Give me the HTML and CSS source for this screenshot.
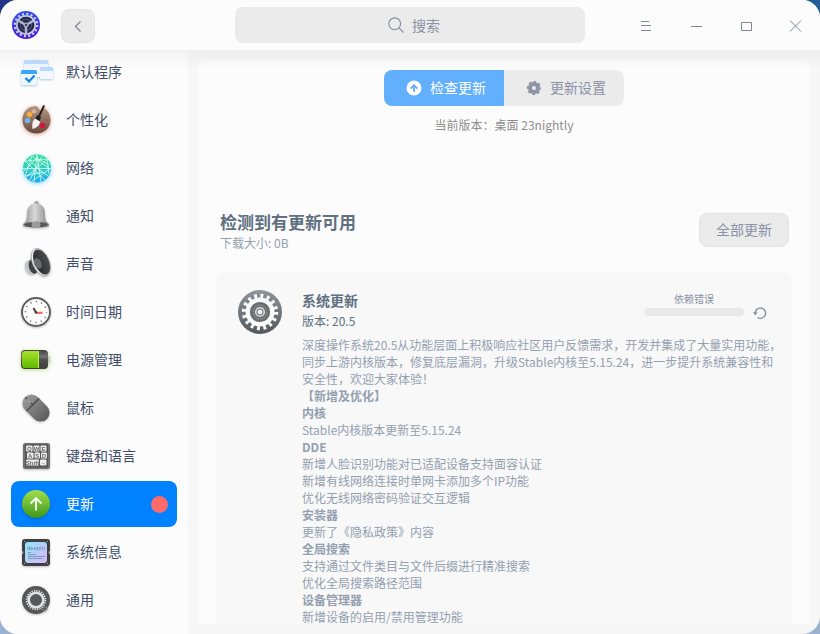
FILE: index.html
```html
<!DOCTYPE html>
<html lang="zh-CN">
<head>
    <meta charset="UTF-8">
    <meta name="viewport" content="width=device-width, initial-scale=1.0">
    <title>控制中心</title>
    <link rel="stylesheet" href="styles.css">
</head>
<body>
    <div class="window">
        <header class="titlebar">
            <div class="titlebar-left">
                <svg class="logo" width="28" height="28" viewBox="0 0 28 28">
                    <defs>
                        <linearGradient id="logo-bg" x1="0" y1="0" x2="0" y2="1">
                            <stop offset="0" stop-color="#2b50f2"/>
                            <stop offset="1" stop-color="#5316d6"/>
                        </linearGradient>
                    </defs>
                    <circle cx="14" cy="14" r="14" fill="url(#logo-bg)"/>
                    <circle cx="14" cy="14" r="11" fill="none" stroke="#cdd2ea" stroke-width="2.600" stroke-dasharray="2 2.320"/>
                    <circle cx="14" cy="14" r="9.200" fill="#23264f" stroke="#c2c8dc" stroke-width="1.800"/>
                    <circle cx="14" cy="14" r="5.600" fill="none" stroke="#4d5272" stroke-width="1.200"/>
                    <path d="M14 14L6.500 9.800M14 14l7.500-4.200M14 14v9" stroke="#b4bad0" stroke-width="2.400"/>
                    <circle cx="14" cy="14" r="2.600" fill="#a3a9c4"/>
                    <circle cx="14" cy="14" r="1.100" fill="#26294d"/>
                </svg>
                <button class="btn back" aria-label="返回">
                    <svg width="16" height="16" viewBox="0 0 16 16" fill="none" stroke="#7f8597" stroke-width="1.300">
                        <path d="M10.500 3.500L5.500 8.500l5 5"/>
                    </svg>
                </button>
            </div>
            <label class="search">
                <svg width="16" height="16" viewBox="0 0 16 16" fill="none" stroke="#8c91a5" stroke-width="1.200">
                    <circle cx="6.700" cy="6.700" r="5.900"/>
                    <path d="M11 11l4.500 4.500"/>
                </svg>
                <input type="text" placeholder="搜索" aria-label="搜索">
            </label>
            <div class="window-controls">
                <button aria-label="菜单"><svg width="16" height="16" viewBox="0 0 16 16"><path d="M4 4.500h8M4 8.500h10M4 13.500h10"/></svg></button>
                <button aria-label="最小化"><svg width="16" height="16" viewBox="0 0 16 16"><path d="M4 9.500h11"/></svg></button>
                <button aria-label="最大化"><svg width="16" height="16" viewBox="0 0 16 16"><path d="M4.500 5.500h10v8h-10z"/></svg></button>
                <button aria-label="关闭"><svg width="16" height="16" viewBox="0 0 16 16"><path d="M3 3.500l11 11M14 3.500l-11 11"/></svg></button>
            </div>
        </header>

        <div class="body">
            <nav class="sidebar">
                <a class="item" href="#">
                    <svg class="soft sky" width="36" height="36" viewBox="0 0 36 36">
                        <rect x="6" y="6" width="24" height="17" rx="1.500" fill="#f0f7ff"/>
                        <path d="M6 10V7.500Q6 6 7.500 6h21Q30 6 30 7.500V10z" fill="#bedcff"/>
                        <rect x="22" y="13" width="13" height="12" rx="1.500" fill="#f3f8ff"/>
                        <path d="M22 17v-2.500q0-1.500 1.500-1.500h10q1.500 0 1.500 1.500V17z" fill="#b9d9ff"/>
                        <rect x="3" y="16" width="16" height="15" rx="1.500" fill="#eef6ff"/>
                        <path d="M3 20v-2.500Q3 16 4.500 16h13q1.500 0 1.500 1.500V20z" fill="#3ea5ff"/>
                        <path d="M7.500 24l3.500 3.500 5.500-6" fill="none" stroke="#0a84f5" stroke-width="2.200"/>
                    </svg>
                    <span>默认程序</span>
                </a>
                <a class="item" href="#">
                    <svg class="soft brown" width="36" height="36" viewBox="0 0 36 36">
                        <defs>
                            <linearGradient id="pal" x1="0" y1="0" x2="0" y2="1">
                                <stop offset="0" stop-color="#b59882"/>
                                <stop offset="1" stop-color="#6b4a3c"/>
                            </linearGradient>
                        </defs>
                        <path d="M17 4C9 4.500 4.500 10.500 4.500 18c0 8 6 13.500 14 13.500S32.500 26 32.500 18c0-5-2.500-9.500-6.500-12-2 1-2 2.500-4 2-1.800-.5-1-4-5-4z" fill="url(#pal)"/>
                        <circle cx="11.500" cy="12.500" r="2.700" fill="#f6ad37"/>
                        <circle cx="16" cy="9.500" r="2.200" fill="#d7b3a6"/>
                        <circle cx="9.500" cy="18.500" r="2.700" fill="#6fb5f5"/>
                        <circle cx="24.500" cy="23.500" r="2.700" fill="#d8103e"/>
                        <path d="M25.800 4.200L20.500 15.500" stroke="#1d1d22" stroke-width="2" stroke-linecap="round"/>
                        <path d="M19.500 13l3.500 2-1.500 4.500-4.500-3z" fill="#222"/>
                        <path d="M17 16.500l5 3c0 3.500-3.500 6.500-7.500 7.500-.5-4-.5-7.500 2.500-10.500z" fill="#f5f3f0"/>
                    </svg>
                    <span>个性化</span>
                </a>
                <a class="item" href="#">
                    <svg class="soft blue" width="36" height="36" viewBox="0 0 36 36">
                        <defs>
                            <linearGradient id="net" x1="0" y1="0" x2="0" y2="1">
                                <stop offset="0" stop-color="#2bdc91"/>
                                <stop offset=".55" stop-color="#35ccc6"/>
                                <stop offset="1" stop-color="#1ba6f2"/>
                            </linearGradient>
                            <clipPath id="net-clip"><circle cx="19" cy="18.500" r="14"/></clipPath>
                        </defs>
                        <circle cx="19" cy="18.500" r="14" fill="url(#net)"/>
                        <g clip-path="url(#net-clip)" fill="none" stroke="#d8fff4" stroke-width=".8">
                            <path d="M5 18.500h28M19 5l-3 27M19 5l4 27M7 11l22-2 2 15M7 11l20 19M30 9L8 27M14 6l-7 20 18-4M14 6l18 13-18 12M10 8l9 10 11 8M24 6L12 30M5 22l14-14 12 7"/>
                        </g>
                    </svg>
                    <span>网络</span>
                </a>
                <a class="item" href="#">
                    <svg class="soft" width="36" height="36" viewBox="0 0 36 36">
                        <defs>
                            <linearGradient id="bell">
                                <stop offset="0" stop-color="#8e8e8e"/>
                                <stop offset=".45" stop-color="#d8d8d8"/>
                                <stop offset="1" stop-color="#858585"/>
                            </linearGradient>
                        </defs>
                        <circle cx="18.500" cy="5.500" r="2.500" fill="#a5a5a5"/>
                        <path d="M18 5.500c-6 0-9 4.500-9 10 0 6-1 8-3 9.500-1.500 1.200-1.500 3 0 3.500 7 1.600 17 1.600 24 0 1.500-.5 1.500-2.300 0-3.500-2-1.500-3-3.500-3-9.500 0-5.500-3-10-9-10z" fill="url(#bell)"/>
                        <ellipse cx="18" cy="26.800" rx="12" ry="2.800" fill="#575757"/>
                        <ellipse cx="18" cy="26.500" rx="4.500" ry="3.200" fill="#9b9b9b"/>
                    </svg>
                    <span>通知</span>
                </a>
                <a class="item" href="#">
                    <svg class="soft" width="36" height="36" viewBox="0 0 36 36">
                        <defs>
                            <linearGradient id="cone">
                                <stop offset="0" stop-color="#29292b"/>
                                <stop offset="1" stop-color="#4c4e51"/>
                            </linearGradient>
                        </defs>
                        <path d="M12 14c-3.500 0-5.500 3-5 7 .5 5 4 8 8 7.500l4-3z" fill="#c3c5cb"/>
                        <path d="M11.500 15c-2 4-.5 11 5 13l3-2-5-14z" fill="#3e3f42"/>
                        <ellipse cx="22.800" cy="16.200" rx="8.300" ry="14.600" transform="rotate(-24 22.800 16.200)" fill="#ececec" stroke="#9d9d9d" stroke-width=".7"/>
                        <ellipse cx="23.600" cy="16" rx="7.200" ry="13.300" transform="rotate(-24 23.600 16)" fill="url(#cone)"/>
                        <ellipse cx="19.800" cy="17.500" rx="3.600" ry="5.500" transform="rotate(-24 19.800 17.500)" fill="#6a6c70"/>
                    </svg>
                    <span>声音</span>
                </a>
                <a class="item" href="#">
                    <svg class="soft" width="36" height="36" viewBox="0 0 36 36">
                        <circle cx="18" cy="18" r="14" fill="#fdfdfd" stroke="#5d5f61" stroke-width="2"/>
                        <circle cx="18" cy="18" r="10.500" fill="none" stroke="#4f4f4f" stroke-width="1.500" stroke-dasharray="1 4.498" stroke-dashoffset=".5"/>
                        <path d="M15.500 14l2.500 4.500" stroke="#444" stroke-width="2"/>
                        <path d="M18 18.800h6.500" stroke="#ff5b5b" stroke-width="2"/>
                        <circle cx="18" cy="18.500" r="1.300" fill="#444"/>
                    </svg>
                    <span>时间日期</span>
                </a>
                <a class="item" href="#">
                    <svg class="soft green" width="36" height="36" viewBox="0 0 36 36">
                        <defs>
                            <linearGradient id="charge" x1="0" y1="0" x2="0" y2="1">
                                <stop offset="0" stop-color="#a7e32d"/>
                                <stop offset="1" stop-color="#61b800"/>
                            </linearGradient>
                            <linearGradient id="cell" x1="0" y1="0" x2="0" y2="1">
                                <stop offset="0" stop-color="#414141"/>
                                <stop offset=".35" stop-color="#747474"/>
                                <stop offset=".5" stop-color="#505050"/>
                                <stop offset="1" stop-color="#3d3d3d"/>
                            </linearGradient>
                        </defs>
                        <rect x="29" y="14" width="3" height="7" rx="1" fill="#c9c9c9"/>
                        <rect x="3" y="8" width="27" height="19" rx="4" fill="url(#cell)"/>
                        <path d="M21 9H7Q4 9 4 12v11q0 3 3 3h14z" fill="url(#charge)"/>
                        <path d="M20.500 9v17" stroke="#b8f34c"/>
                    </svg>
                    <span>电源管理</span>
                </a>
                <a class="item" href="#">
                    <svg class="soft" width="36" height="36" viewBox="0 0 36 36">
                        <defs>
                            <linearGradient id="mouse" x1="0" y1="0" x2="0" y2="1">
                                <stop offset="0" stop-color="#9a9a9a"/>
                                <stop offset="1" stop-color="#5a5a5a"/>
                            </linearGradient>
                        </defs>
                        <g transform="rotate(-45 18 18)">
                            <rect x="9" y="2.500" width="18" height="31" rx="9" fill="url(#mouse)"/>
                            <path d="M9 13.500h18M18 3v10.500" stroke="#454545" stroke-width="1.200"/>
                            <path d="M18 6v4" stroke="#a0a0a0" stroke-width="1.600" stroke-linecap="round"/>
                        </g>
                    </svg>
                    <span>鼠标</span>
                </a>
                <a class="item" href="#">
                    <svg class="soft" width="36" height="36" viewBox="0 0 36 36">
                        <rect x="5" y="5" width="27" height="26" rx="2.500" fill="#707070"/>
                        <path d="M7 6.500h23v23H7z" fill="#555"/>
                        <g fill="#ededed">
                            <rect x="8" y="7.500" width="6.500" height="6" rx="1"/>
                            <rect x="15.500" y="7.500" width="6" height="6" rx="1"/>
                            <rect x="22.500" y="7.500" width="6" height="6" rx="1"/>
                            <rect x="9" y="14.500" width="6.500" height="6" rx="1"/>
                            <rect x="16.500" y="14.500" width="5.500" height="6" rx="1"/>
                            <rect x="23" y="14.500" width="6" height="6" rx="1"/>
                            <rect x="8" y="21.500" width="13" height="6" rx="1"/>
                            <rect x="22" y="21.500" width="6.500" height="6" rx="1"/>
                        </g>
                        <g class="keys" text-anchor="middle" fill="#666">
                            <text x="11.300" y="12.700">Q</text><text x="18.500" y="12.700">W</text><text x="25.500" y="12.700">E</text>
                            <text x="12.200" y="19.700">A</text><text x="19.200" y="19.700">S</text><text x="26" y="19.700">D</text>
                            <text x="14.500" y="26.700">Shift</text><text x="25.200" y="26.500">→</text>
                        </g>
                    </svg>
                    <span>键盘和语言</span>
                </a>
                <a class="item active" href="#" aria-current="page">
                    <svg class="soft" width="36" height="36" viewBox="0 0 36 36">
                        <defs>
                            <linearGradient id="upd" x1="0" y1="0" x2="0" y2="1">
                                <stop offset="0" stop-color="#9fe04b"/>
                                <stop offset="1" stop-color="#3f971d"/>
                            </linearGradient>
                        </defs>
                        <circle cx="18" cy="18" r="14" fill="url(#upd)"/>
                        <path d="M18 24.500V12M12.500 17.500L18 12l5.500 5.500" fill="none" stroke="#fff" stroke-width="1.800"/>
                    </svg>
                    <span>更新</span>
                    <i class="dot"></i>
                </a>
                <a class="item" href="#">
                    <svg class="soft" width="36" height="36" viewBox="0 0 36 36">
                        <defs>
                            <linearGradient id="chip" x1="0" y1="0" x2="1" y2="1">
                                <stop offset="0" stop-color="#8fe6fb"/>
                                <stop offset=".5" stop-color="#b6cdf9"/>
                                <stop offset="1" stop-color="#d6b8f2"/>
                            </linearGradient>
                        </defs>
                        <rect x="4" y="5" width="28" height="27" rx="3" fill="#3f4043"/>
                        <g fill="#b5b5b5">
                            <circle cx="6.500" cy="7.500" r=".6"/><circle cx="29.500" cy="7.500" r=".6"/>
                            <circle cx="6.500" cy="29.500" r=".6"/><circle cx="29.500" cy="29.500" r=".6"/>
                            <path d="M4 16.500l1.500 2-1.500 2zM32 16.500l-1.500 2 1.500 2z"/>
                        </g>
                        <rect x="7" y="8" width="22" height="21" rx="3" fill="url(#chip)"/>
                        <text class="chip-text" x="18" y="15.500" text-anchor="middle" fill="#65829b">deepin</text>
                        <path d="M10 18.500h3M10 20.500h8M10 22.500h17M10 24.500h14" stroke="#718cb5" stroke-width=".8"/>
                    </svg>
                    <span>系统信息</span>
                </a>
                <a class="item" href="#">
                    <svg class="soft" width="36" height="36" viewBox="0 0 36 36">
                        <circle cx="18" cy="18" r="14" fill="#555658"/>
                        <circle cx="18" cy="18" r="9.300" fill="none" stroke="#e2e2e2" stroke-width="1.800" stroke-dasharray="1.300 1.135"/>
                        <circle cx="18" cy="18" r="7.300" fill="#57585a" stroke="#e2e2e2" stroke-width="2.600"/>
                        <circle cx="27" cy="27" r="2.200" fill="none" stroke="#a0a0a0" stroke-width="1.200" stroke-dasharray="1 .7"/>
                    </svg>
                    <span>通用</span>
                </a>
            </nav>

            <main class="content">
                <div class="panel">
                    <div class="tabs">
                        <button class="tab tab-active">
                            <svg width="16" height="16" viewBox="0 0 16 16">
                                <circle cx="8" cy="8" r="7.500" fill="#fff"/>
                                <path d="M8 12V5.500M4.700 8.500L8 5.200l3.300 3.300" fill="none" stroke="#62affe" stroke-width="1.800"/>
                            </svg>
                            <span>检查更新</span>
                        </button>
                        <button class="tab">
                            <svg width="16" height="16" viewBox="0 0 16 16">
                                <circle cx="8" cy="8" r="4" fill="none" stroke="#8f94a6" stroke-width="4"/>
                                <circle cx="8" cy="8" r="6.200" fill="none" stroke="#8f94a6" stroke-width="1.800" stroke-dasharray="2.900 1.970" stroke-dashoffset="1.400"/>
                            </svg>
                            <span>更新设置</span>
                        </button>
                    </div>
                    <p class="current-version">当前版本：桌面 23nightly</p>

                    <div class="summary">
                        <div>
                            <h1>检测到有更新可用</h1>
                            <p>下载大小: 0B</p>
                        </div>
                        <button class="btn update-all"><span>全部更新</span></button>
                    </div>

                    <section class="card">
                        <svg class="card-icon" width="44" height="44" viewBox="0 0 44 44">
                            <defs>
                                <linearGradient id="gear" x1="0" y1="0" x2="0" y2="1">
                                    <stop offset="0" stop-color="#8e959a"/>
                                    <stop offset="1" stop-color="#52585c"/>
                                </linearGradient>
                            </defs>
                            <circle cx="22" cy="22" r="22" fill="url(#gear)"/>
                            <circle cx="22" cy="22" r="16" fill="none" stroke="#f9f9f9" stroke-width="4.500" stroke-dasharray="2.800 3.483"/>
                            <circle cx="22" cy="22" r="12.300" fill="#666b6f" stroke="#f9f9f9" stroke-width="4.400"/>
                            <circle cx="22" cy="22" r="7" fill="none" stroke="#9b9892" stroke-width="1.500" stroke-dasharray="1 1"/>
                            <circle cx="22" cy="22" r="4.300" fill="#666b6f" stroke="#dedede" stroke-width="1.600"/>
                            <circle cx="22" cy="22" r="2.500" fill="#eee"/>
                        </svg>
                        <div class="card-main">
                            <div class="card-head">
                                <div>
                                    <h2>系统更新</h2>
                                    <p class="version">版本: 20.5</p>
                                </div>
                                <div class="status">
                                    <div class="status-bar">
                                        <label for="update-progress">依赖错误</label>
                                        <progress id="update-progress" value="0" max="100"></progress>
                                    </div>
                                    <button class="retry" aria-label="重试">
                                        <svg width="16" height="16" viewBox="0 0 16 16">
                                            <path d="M3.200 8.500a5.200 5.200 0 1 1 2.300 4" fill="none" stroke="#8f94a6" stroke-width="1.500"/>
                                            <path d="M.8 7.200h5L3.300 10.500z" fill="#8f94a6"/>
                                        </svg>
                                    </button>
                                </div>
                            </div>
                            <div class="notes">
                                <p>深度操作系统20.5从功能层面上积极响应社区用户反馈需求，开发并集成了大量实用功能，同步上游内核版本，修复底层漏洞，升级Stable内核至5.15.24，进一步提升系统兼容性和安全性，欢迎大家体验！</p>
                                <h3>【新增及优化】</h3>
                                <h3>内核</h3>
                                <p>Stable内核版本更新至5.15.24</p>
                                <h3>DDE</h3>
                                <p>新增人脸识别功能对已适配设备支持面容认证</p>
                                <p>新增有线网络连接时单网卡添加多个IP功能</p>
                                <p>优化无线网络密码验证交互逻辑</p>
                                <h3>安装器</h3>
                                <p>更新了《隐私政策》内容</p>
                                <h3>全局搜索</h3>
                                <p>支持通过文件类目与文件后缀进行精准搜索</p>
                                <p>优化全局搜索路径范围</p>
                                <h3>设备管理器</h3>
                                <p>新增设备的启用/禁用管理功能</p>
                            </div>
                        </div>
                    </section>
                </div>
            </main>
        </div>
    </div>
</body>
</html>
```
FILE: styles.css
```css
:root {
    --surface: #fcfcfc;
    --page: #f7f7f7;
    --button-bg: #ebebeb;
    --accent: #0081ff;
    --muted: #8c91a5;
}

* {
    box-sizing: border-box;
    margin: 0;
    padding: 0;
}

body {
    height: 100vh;
    background: linear-gradient(90deg, #1f3784, #245c98) top / 100% 50% no-repeat,
                linear-gradient(#24407c 94%, #9db2d2 97%);
    font-family: "Noto Sans CJK SC", sans-serif;
    font-size: 14px;
    color: #414d68;
}

button,
input {
    font: inherit;
    border: none;
    background: none;
}

svg {
    display: block;
    flex: none;
}

.window {
    display: flex;
    flex-direction: column;
    height: 100vh;
    border-radius: 18px;
    overflow: hidden;
    background-color: var(--page);
}

/* Title bar */
.titlebar {
    position: relative;
    z-index: 1;
    flex: none;
    display: grid;
    grid-template-columns: 1fr minmax(0, 350px) 1fr;
    align-items: center;
    height: 50px;
    background-color: var(--surface);
}

/* Fading shadow over the content below */
.titlebar::after {
    content: '';
    position: absolute;
    top: 100%;
    left: 0;
    right: 0;
    height: 20px;
    background: linear-gradient(rgba(0, 0, 0, 0.04), rgba(0, 0, 0, 0));
    pointer-events: none;
}

.titlebar-left {
    display: flex;
    align-items: center;
    gap: 21px;
    padding-left: 12px;
}

.btn {
    display: flex;
    justify-content: center;
    align-items: center;
    height: 34px;
    border: 1px solid #e3e3e3;
    border-radius: 8px;
    background-color: var(--button-bg);
    color: var(--muted);
}

.back {
    width: 34px;
    margin-top: 2px;
}

.search {
    display: flex;
    justify-content: center;
    align-items: center;
    gap: 8px;
    height: 36px;
    padding-left: 8px;
    border-radius: 8px;
    background-color: var(--button-bg);
}

.search input {
    field-sizing: content;
    min-width: 28px;
    color: #414d68;
    outline: none;
}

.search input::placeholder {
    color: var(--muted);
    opacity: 1;
}

.window-controls {
    display: flex;
    justify-content: flex-end;
}

.window-controls button {
    display: flex;
    justify-content: center;
    align-items: center;
    width: 50px;
    height: 50px;
}

.window-controls svg {
    fill: none;
    stroke: #7f859c;
}

.body {
    flex: 1;
    display: flex;
    min-height: 0;
}

/* Sidebar */
.sidebar {
    flex: none;
    display: flex;
    flex-direction: column;
    gap: 2px;
    width: 188px;
    margin-top: -1px;
    padding: 0 11px;
    background-color: var(--surface);
}

.item {
    display: flex;
    align-items: center;
    gap: 12px;
    flex: none;
    height: 46px;
    padding: 0 9px 0 7px;
    border-radius: 8px;
    color: #414d68;
    text-decoration: none;
}

.item span,
.tab span,
.btn span {
    padding-bottom: 2px;
}

.item.active {
    background-color: var(--accent);
    color: #fff;
}

.dot {
    width: 17px;
    height: 17px;
    margin-left: auto;
    border-radius: 50%;
    background-color: #ff6a6a;
}

.soft {
    filter: drop-shadow(0 1px 1px rgba(0, 0, 0, 0.25));
}

.soft.sky {
    filter: drop-shadow(0 1px 1px rgba(40, 120, 200, 0.4));
}

.soft.brown {
    filter: drop-shadow(0 1px 2px rgba(190, 80, 40, 0.5));
}

.soft.blue {
    filter: drop-shadow(0 1px 2px rgba(30, 180, 255, 0.5));
}

.soft.green {
    filter: drop-shadow(0 1px 2px rgba(130, 200, 30, 0.5));
}

.keys {
    font: bold 6px "Liberation Sans", sans-serif;
}

.chip-text {
    font: 6px "Liberation Sans", sans-serif;
}

/* Content */
.content {
    flex: 1;
    min-width: 0;
    padding: 10px;
}

.panel {
    height: 100%;
    padding: 10px 18px 0;
    border-radius: 8px 8px 0 0;
    background-color: var(--surface);
    overflow: hidden;
}

.tabs {
    display: flex;
    justify-content: center;
}

.tab {
    display: flex;
    align-items: center;
    gap: 8px;
    height: 36px;
    padding: 0 18px 0 22px;
    border-radius: 0 8px 8px 0;
    background-color: var(--button-bg);
    color: var(--muted);
}

.tab-active {
    border-radius: 8px 0 0 8px;
    background-color: #62affe;
    color: #fff;
}

.current-version {
    margin-top: 10px;
    font-size: 12px;
    line-height: 18px;
    text-align: center;
    color: #8e8e8e;
}

.summary {
    display: flex;
    justify-content: space-between;
    align-items: center;
    margin-top: 76px;
    padding: 0 3px 0 4px;
}

.summary h1 {
    font-size: 17px;
    line-height: 24px;
    color: #5f7081;
}

.summary p {
    font-size: 12px;
    line-height: 18px;
    color: #94a0af;
}

.update-all {
    margin-bottom: 2px;
    padding: 0 16px;
}

/* Update card */
.card {
    display: flex;
    align-items: flex-start;
    gap: 20px;
    margin-top: 20px;
    padding: 18px 8px 18px 22px;
    border-radius: 8px;
    background-color: #f8f8f8;
}

.card-main {
    flex: 1;
    min-width: 0;
}

.card-head {
    display: flex;
    justify-content: space-between;
}

.card-head h2 {
    font-size: 14px;
    line-height: 20px;
    color: #5f7081;
}

.version {
    margin-top: 2px;
    font-size: 12px;
    line-height: 18px;
    color: #5f7081;
}

.status {
    display: flex;
    align-items: flex-end;
    gap: 8px;
    padding: 0 16px 10px 0;
}

.status-bar {
    display: flex;
    flex-direction: column;
    align-items: center;
    padding-bottom: 5px;
    font-size: 10px;
    line-height: 18px;
    color: var(--muted);
}

progress {
    appearance: none;
    display: block;
    width: 100px;
    height: 8px;
    border: none;
    border-radius: 4px;
    background-color: #e9e9e9;
    overflow: hidden;
}

progress::-webkit-progress-bar {
    background-color: #e9e9e9;
}

progress::-webkit-progress-value {
    background-color: var(--accent);
}

.notes {
    margin-top: 5px;
    font-size: 12px;
    line-height: 17px;
    color: #94a0af;
}

.notes h3 {
    font-size: 12px;
}
```
